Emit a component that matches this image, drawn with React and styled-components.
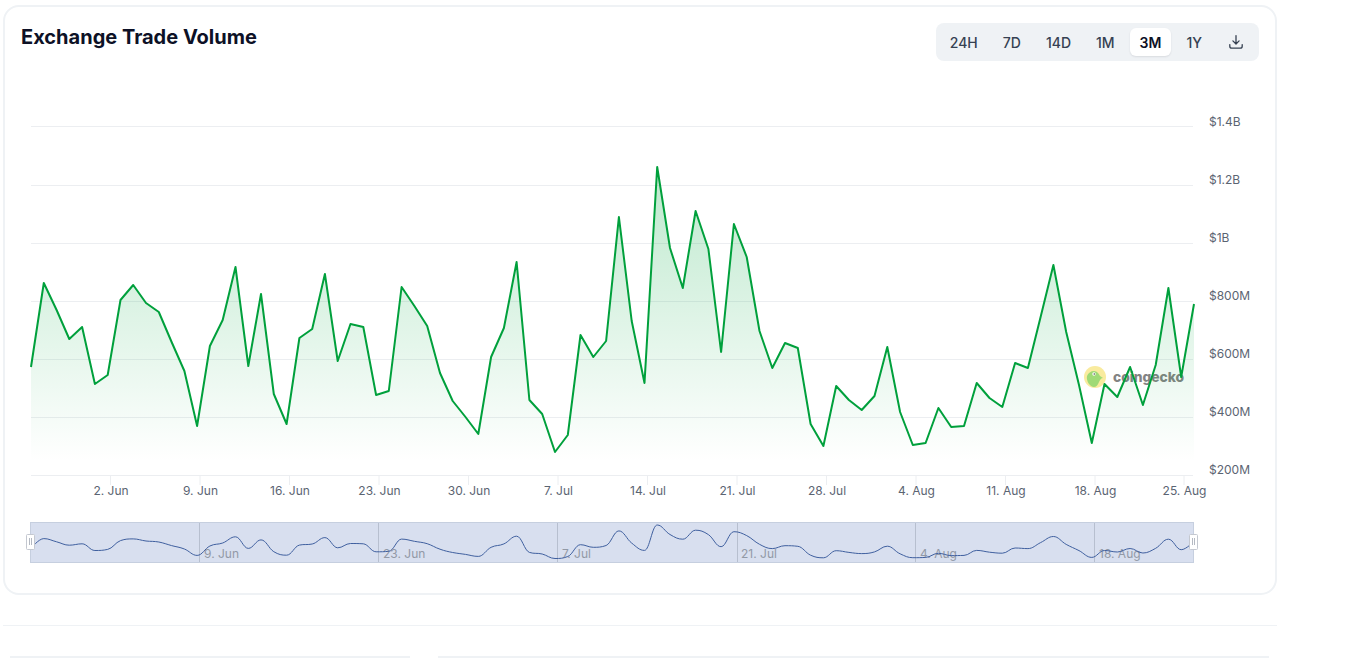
import styled, { createGlobalStyle } from "styled-components";

const GlobalStyle = createGlobalStyle`
  html, body {
    margin: 0;
    height: 100%;
    overflow: hidden;
    background: #fff;
    font-family: Inter, "Liberation Sans", sans-serif;
  }
`;

// pixel y of every daily point, x is worked out from the index
const volume = [
  367, 283, 310, 339, 327, 384, 375, 300, 285, 303, 312, 342, 371, 426, 346, 320, 267, 366, 294, 394,
  424, 338, 329, 274, 361, 324, 327, 395, 391, 287, 306, 326, 373, 401, 417, 434, 357, 328, 262, 400,
  414, 452, 435, 335, 357, 341, 217, 321, 383, 167, 248, 288, 211, 249, 352, 224, 257, 331, 368, 343,
  348, 424, 446, 386, 400, 410, 396, 347, 412, 445, 443, 408, 427, 426, 383, 398, 407, 363, 368, 317,
  265, 332, 385, 443, 384, 397, 367, 405, 365, 288, 377, 304,
];

const LEFT = 31;
const RIGHT = 1194;
const points = volume.map((y, i) => [LEFT + (i * (RIGHT - LEFT)) / (volume.length - 1), y]);
const linePath = points.map(([x, y], i) => `${i ? "L" : "M"}${x.toFixed(1)} ${y}`).join(" ");
const areaPath = `${linePath} L${RIGHT} 475 L${LEFT} 475 Z`;

const navPoints = points.map(([x, y]) => [x, 525 + ((y - 167) * 33.5) / 285]);

// same smoothing as a highcharts spline
const splinePath = (pts) => {
  const controls = pts.map(([x, y], i) => {
    if (i === 0 || i === pts.length - 1) return { lx: x, ly: y, rx: x, ry: y };
    const [px, py] = pts[i - 1];
    const [nx, ny] = pts[i + 1];
    const lx = (1.5 * x + px) / 2.5;
    const rx = (1.5 * x + nx) / 2.5;
    let ly = (1.5 * y + py) / 2.5;
    let ry = (1.5 * y + ny) / 2.5;
    const fix = ((ry - ly) * (rx - x)) / (rx - lx) + y - ry;
    ly += fix;
    ry += fix;
    if (ly > py && ly > y) {
      ly = Math.max(py, y);
      ry = 2 * y - ly;
    } else if (ly < py && ly < y) {
      ly = Math.min(py, y);
      ry = 2 * y - ly;
    }
    if (ry > ny && ry > y) {
      ry = Math.max(ny, y);
      ly = 2 * y - ry;
    } else if (ry < ny && ry < y) {
      ry = Math.min(ny, y);
      ly = 2 * y - ry;
    }
    return { lx, ly, rx, ry };
  });
  return pts
    .map(([x, y], i) => {
      if (i === 0) return `M${x.toFixed(1)} ${y.toFixed(1)}`;
      const a = controls[i - 1];
      const b = controls[i];
      return `C${a.rx.toFixed(1)} ${a.ry.toFixed(1)} ${b.lx.toFixed(1)} ${b.ly.toFixed(1)} ${x.toFixed(1)} ${y.toFixed(1)}`;
    })
    .join(" ");
};

const yAxis = [
  { label: "$1.4B", y: 126, textY: 126 },
  { label: "$1.2B", y: 185, textY: 184 },
  { label: "$1B", y: 243, textY: 242 },
  { label: "$800M", y: 301, textY: 300 },
  { label: "$600M", y: 359, textY: 358 },
  { label: "$400M", y: 417, textY: 416 },
  { label: "$200M", y: 475, textY: 474 },
];

const xAxis = [
  { label: "2. Jun", x: 110.5 },
  { label: "9. Jun", x: 200 },
  { label: "16. Jun", x: 289.5 },
  { label: "23. Jun", x: 379 },
  { label: "30. Jun", x: 468.5 },
  { label: "7. Jul", x: 558 },
  { label: "14. Jul", x: 647.5 },
  { label: "21. Jul", x: 737 },
  { label: "28. Jul", x: 826.5 },
  { label: "4. Aug", x: 916 },
  { label: "11. Aug", x: 1005.5 },
  { label: "18. Aug", x: 1095 },
  { label: "25. Aug", x: 1184 },
];

const navAxis = [
  { label: "9. Jun", x: 199, textX: 204 },
  { label: "23. Jun", x: 378, textX: 383 },
  { label: "7. Jul", x: 557, textX: 562 },
  { label: "21. Jul", x: 737, textX: 741 },
  { label: "4. Aug", x: 915, textX: 920 },
  { label: "18. Aug", x: 1094, textX: 1099 },
];

const ranges = ["24H", "7D", "14D", "1M", "3M", "1Y"];

const DownloadIcon = () => (
  <svg width="16" height="16" viewBox="0 0 16 16" fill="none" stroke="#364152" strokeWidth="1.3" strokeLinecap="round" strokeLinejoin="round">
    <path d="M8 1.6v8.2M4.9 6.9 8 10l3.1-3.1" />
    <path d="M1.8 10.6v1.6c0 1.2.9 2 2 2h8.400c1.100 0 2-.8 2-2v-1.600" />
  </svg>
);

const Handle = ({ x }) => (
  <g>
    <HandleBox x={x - 4} y={534.5} width={8} height={15} rx={1} />
    <HandleGrip d={`M${x - 1} 538v7M${x + 1} 538v7`} />
  </g>
);

const Watermark = () => (
  <WatermarkGroup>
    <circle cx="1095" cy="377" r="11" fill="#f8e88e" />
    <path d="M1087 376c1-3 4-5 7-5 3 0 5 3 6 5l3 2c-2 0-3 2-4 4-1 3-3 5-5 5-4 0-8-6-7-11z" fill="#8fd45f" />
    <circle cx="1094" cy="374" r="1.700" fill="#fff" />
    <circle cx="1094.300" cy="374" r=".8" fill="#333" />
    <WatermarkText x="1113" y="381.500">coingecko</WatermarkText>
  </WatermarkGroup>
);

export default function App() {
  return (
    <Page>
      <GlobalStyle />
      <Card>
        <Header>
          <Title>Exchange Trade Volume</Title>
          <RangeGroup>
            {ranges.map((r) => (
              <RangeButton key={r} $active={r === "3M"}>
                {r}
              </RangeButton>
            ))}
            <IconButton aria-label="Download">
              <DownloadIcon />
            </IconButton>
          </RangeGroup>
        </Header>
        <ChartSvg viewBox="5 61 1270 531">
          <defs>
            <linearGradient id="volumeFill" gradientUnits="userSpaceOnUse" x1="0" y1="167" x2="0" y2="462">
              <stop offset="0" stopColor="#00a83e" stopOpacity="0.26" />
              <stop offset="1" stopColor="#00a83e" stopOpacity="0" />
            </linearGradient>
          </defs>

          {yAxis.map((t) => (
            <GridLine key={t.label} x1={31} x2={1193} y1={t.y + 0.5} y2={t.y + 0.5} />
          ))}
          {xAxis.map((t) => (
            <GridLine key={t.label} x1={t.x} x2={t.x} y1={475} y2={485} />
          ))}

          <Watermark />
          <path d={areaPath} fill="url(#volumeFill)" />
          <VolumeLine d={linePath} />

          {yAxis.map((t) => (
            <AxisLabel key={t.label} x={1209} y={t.textY}>
              {t.label}
            </AxisLabel>
          ))}
          {xAxis.map((t) => (
            <AxisLabel key={t.label} x={t.x + 0.5} y={495} textAnchor="middle">
              {t.label}
            </AxisLabel>
          ))}

          <NavBackground x={30.5} y={522.5} width={1163} height={40} />
          {navAxis.map((t) => (
            <NavTick key={t.label} x1={t.x + 0.5} x2={t.x + 0.5} y1={523} y2={562} />
          ))}
          {navAxis.map((t) => (
            <NavLabel key={t.label} x={t.textX} y={558}>
              {t.label}
            </NavLabel>
          ))}
          <NavLine d={splinePath(navPoints)} />
          <Handle x={30.5} />
          <Handle x={1193.5} />
        </ChartSvg>
      </Card>
      <Divider />
      <BottomRow>
        <SidePanel />
        <MainPanel />
      </BottomRow>
    </Page>
  );
}

// styled-components
const Page = styled.div`
  width: 1274px;
  margin-left: 3px;
  padding-top: 5px;
`;

const Card = styled.section`
  box-sizing: border-box;
  height: 590px;
  display: flex;
  flex-direction: column;
  background: #fff;
  border: 2px solid #eff2f5;
  border-radius: 16px;
`;

const Header = styled.header`
  display: flex;
  justify-content: space-between;
  align-items: flex-start;
  padding: 16px 16px 0 16px;
  height: 38px;
`;

const Title = styled.h2`
  margin: 0;
  font-size: 20px;
  line-height: 28px;
  font-weight: 700;
  color: #0d1126;
`;

const RangeGroup = styled.div`
  display: flex;
  align-items: center;
  gap: 5px;
  height: 38px;
  box-sizing: border-box;
  padding: 0 4px;
  background: #eff2f5;
  border-radius: 8px;
`;

const RangeButton = styled.button`
  height: 28px;
  padding: 0 10px;
  border: 0;
  border-radius: 6px;
  font-family: Inter, "Liberation Sans", sans-serif;
  font-size: 14px;
  font-weight: ${(p) => (p.$active ? 600 : 500)};
  color: ${(p) => (p.$active ? "#0d1126" : "#364152")};
  background: ${(p) => (p.$active ? "#fff" : "transparent")};
  box-shadow: ${(p) => (p.$active ? "0 1px 2px rgba(16, 24, 40, 0.1)" : "none")};
`;

const IconButton = styled.button`
  display: flex;
  align-items: center;
  justify-content: center;
  width: 38px;
  height: 28px;
  padding: 0;
  border: 0;
  background: transparent;
`;

const ChartSvg = styled.svg`
  display: block;
  width: 1270px;
  height: 531px;
  flex: none;
`;

const GridLine = styled.line`
  stroke: #eceef1;
  stroke-width: 1;
`;

const VolumeLine = styled.path`
  fill: none;
  stroke: #00a03c;
  stroke-width: 2;
  stroke-linejoin: round;
`;

const AxisLabel = styled.text`
  font-family: Inter, "Liberation Sans", sans-serif;
  font-size: 12px;
  fill: #5b6472;
`;

const WatermarkGroup = styled.g`
  opacity: 0.85;
`;

const WatermarkText = styled.text`
  font-family: Inter, "Liberation Sans", sans-serif;
  font-size: 13.8px;
  font-weight: 800;
  fill: #6e6e6e;
`;

const NavBackground = styled.rect`
  fill: #d8dfef;
  stroke: #c6cfdf;
  stroke-width: 1;
`;

const NavTick = styled.line`
  stroke: #b7bfcf;
  stroke-width: 1;
`;

const NavLabel = styled.text`
  font-family: Inter, "Liberation Sans", sans-serif;
  font-size: 12px;
  fill: #9299a6;
`;

const NavLine = styled.path`
  fill: none;
  stroke: #3f5f9f;
  stroke-width: 1;
`;

const HandleBox = styled.rect`
  fill: #fff;
  stroke: #c4c8d0;
  stroke-width: 1;
`;

const HandleGrip = styled.path`
  fill: none;
  stroke: #b4b9c2;
  stroke-width: 1;
`;

const Divider = styled.hr`
  margin: 30px 0 0;
  border: 0;
  border-top: 1px solid #eff2f5;
`;

const BottomRow = styled.div`
  display: flex;
  gap: 28px;
  margin-top: 30px;
  padding: 0 8px 0 7px;
`;

const SidePanel = styled.div`
  width: 400px;
  border-top: 2px solid #eff2f5;
`;

const MainPanel = styled.div`
  flex: 1;
  border-top: 2px solid #eff2f5;
`;
